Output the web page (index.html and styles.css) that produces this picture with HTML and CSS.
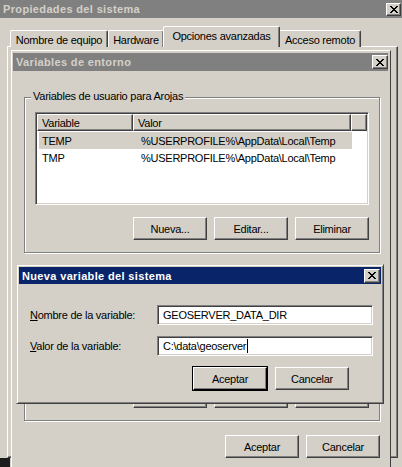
FILE: index.html
```html
<!DOCTYPE html>
<html lang="es">
<head>
<meta charset="utf-8">
<title>Propiedades del sistema</title>
<link rel="stylesheet" href="styles.css">
</head>
<body>
<div class="desk">
  <div class="win props">
    <div class="titlebar inactive props-title">
      <span>Propiedades del sistema</span>
      <span class="xbtn xsmall"><svg width="8" height="7" viewBox="0 0 8 7"><path d="M0 0h2v1H0z M6 0h2v1H6z M1 1h2v1H1z M5 1h2v1H5z M2 2h4v1H2z M3 3h2v1H3z M2 4h4v1H2z M1 5h2v1H1z M5 5h2v1H5z M0 6h2v1H0z M6 6h2v1H6z"/></svg></span>
    </div>
    <div class="tabs">
      <div class="tab t1">Nombre de equipo</div>
      <div class="tab t2">Hardware</div>
      <div class="tab t3 sel">Opciones avanzadas</div>
      <div class="tab t4">Acceso remoto</div>
    </div>
    <div class="tabpanel"></div>
    <div class="stub"></div>
  </div>

  <div class="win env">
    <div class="titlebar inactive env-title">
      <span>Variables de entorno</span>
      <span class="xbtn"><svg width="8" height="7" viewBox="0 0 8 7"><path d="M0 0h2v1H0z M6 0h2v1H6z M1 1h2v1H1z M5 1h2v1H5z M2 2h4v1H2z M3 3h2v1H3z M2 4h4v1H2z M1 5h2v1H1z M5 5h2v1H5z M0 6h2v1H0z M6 6h2v1H6z"/></svg></span>
    </div>
    <div class="env-body">
      <div class="group">
        <span class="glabel">Variables de usuario para Arojas</span>
        <div class="listview">
          <div class="lv-head">
            <div class="hcol c1">Variable</div>
            <div class="hcol c2">Valor</div>
            <div class="hcol c3"></div>
          </div>
          <div class="lv-row sel"><span class="c1">TEMP</span><span class="c2">%USERPROFILE%\AppData\Local\Temp</span></div>
          <div class="lv-row"><span class="c1">TMP</span><span class="c2">%USERPROFILE%\AppData\Local\Temp</span></div>
        </div>
        <div class="btnrow">
          <div class="btn">Nueva...</div>
          <div class="btn">Editar...</div>
          <div class="btn">Eliminar</div>
        </div>
      </div>
      <div class="group">
        <div class="listview"></div>
        <div class="btnrow">
          <div class="btn"></div>
          <div class="btn"></div>
          <div class="btn"></div>
        </div>
      </div>
      <div class="btnrow bottom">
        <div class="btn">Aceptar</div>
        <div class="btn">Cancelar</div>
      </div>
    </div>
  </div>

  <div class="win newvar">
    <div class="titlebar active nv-title">
      <span>Nueva variable del sistema</span>
      <span class="xbtn"><svg width="8" height="7" viewBox="0 0 8 7"><path d="M0 0h2v1H0z M6 0h2v1H6z M1 1h2v1H1z M5 1h2v1H5z M2 2h4v1H2z M3 3h2v1H3z M2 4h4v1H2z M1 5h2v1H1z M5 5h2v1H5z M0 6h2v1H0z M6 6h2v1H6z"/></svg></span>
    </div>
    <div class="nv-body">
      <div class="field">
        <span class="flabel"><u>N</u>ombre de la variable:</span>
        <div class="input">GEOSERVER_DATA_DIR</div>
      </div>
      <div class="field">
        <span class="flabel"><u>V</u>alor de la variable:</span>
        <div class="input">C:\data\geoserver<span class="caret"></span></div>
      </div>
      <div class="nv-btns">
        <div class="btn default">Aceptar</div>
        <div class="btn">Cancelar</div>
      </div>
    </div>
  </div>
</div>
</body>
</html>
```
FILE: styles.css
```css
* { box-sizing: border-box; }
html, body { margin: 0; padding: 0; }
body {
  width: 402px;
  height: 467px;
  overflow: hidden;
  background: #d4d0c8;
  font: 11px "Liberation Sans", Arial, sans-serif;
  letter-spacing: -0.25px;
  color: #000;
}
.desk { position: relative; width: 402px; height: 467px; overflow: hidden; }
.win { position: absolute; background: #d4d0c8; }

/* title bars */
.titlebar {
  display: flex;
  align-items: center;
  justify-content: space-between;
  height: 18px;
  font-weight: bold;
  letter-spacing: 0.35px;
  padding: 0 2px 0 3px;
  white-space: nowrap;
}
.titlebar.inactive { background: #808080; color: #d4d0c8; }
.titlebar.active { background: #0a246a; color: #fff; }
.xbtn {
  width: 16px;
  height: 14px;
  background: #d4d0c8;
  border: 1px solid;
  border-color: #fff #404040 #404040 #fff;
  box-shadow: inset -1px -1px #808080;
  display: flex;
  align-items: center;
  justify-content: center;
}
.xbtn svg { display: block; fill: #000; }
.xsmall { width: 15px; height: 13px; }

/* outer window */
.props { left: 0; top: 0; width: 404px; height: 467px; }
.props-title { padding-right: 3px; }
.tabs {
  display: flex;
  align-items: flex-end;
  height: 20px;
  margin-top: 9px;
  padding-left: 10px;
  position: relative;
  z-index: 1;
}
.tab {
  height: 17px;
  border: 1px solid;
  border-color: #fff #404040 transparent #fff;
  border-bottom: 0;
  border-radius: 2px 2px 0 0;
  box-shadow: inset -1px 0 #808080;
  display: flex;
  align-items: center;
  justify-content: center;
  padding-top: 1px;
  background: #d4d0c8;
  white-space: nowrap;
}
.t1 { width: 98px; }
.t2 { width: 56px; }
.t3 { width: 117px; }
.t4 { width: 82px; }
.tab.sel { height: 21px; margin: 0 -1px; padding-top: 0; padding-bottom: 3px; position: relative; z-index: 2; }
.tabpanel {
  margin: -1px 0 0 7px;
  width: 391px;
  height: 412px;
  border: 1px solid;
  border-color: #fff #404040 #404040 #fff;
  box-shadow: inset -1px -1px #808080;
}
.stub { position: absolute; left: 0; top: 458px; width: 10px; height: 9px; background: #1c1c1c; }

/* env window */
.env {
  left: 11px;
  top: 50px;
  width: 380px;
  height: 430px;
  border: 1px solid;
  border-color: #fff #404040 #404040 #fff;
  padding: 2px 2px 0 1px;
}
.env-title { padding-right: 0; }
.env-body {
  display: flex;
  flex-direction: column;
  padding: 26px 0 0 11px;
}
.group {
  position: relative;
  width: 356px;
  height: 156px;
  border: 1px solid #808080;
  box-shadow: inset 1px 1px #fff, 1px 1px #fff;
  padding: 14px 10px 0 10px;
  display: flex;
  flex-direction: column;
}
.group + .group { margin-top: 12px; }
.glabel {
  position: absolute;
  left: 6px;
  top: -8px;
  padding: 0 2px;
  background: #d4d0c8;
  white-space: nowrap;
}
.listview {
  width: 334px;
  height: 93px;
  background: #fff;
  border: 1px solid;
  border-color: #808080 #fff #fff #808080;
  box-shadow: inset 1px 1px #404040, inset -1px -1px #d4d0c8;
  padding: 1px;
  overflow: hidden;
}
.lv-head { display: flex; height: 17px; }
.hcol {
  height: 17px;
  background: #d4d0c8;
  border: 1px solid;
  border-color: #fff #404040 #404040 #fff;
  box-shadow: inset -1px -1px #808080;
  padding-left: 4px;
  display: flex;
  align-items: center;
}
.hcol.c1 { width: 96px; }
.hcol.c2 { width: 218px; }
.hcol.c3 { flex: 1; }
.lv-row {
  display: flex;
  align-items: center;
  height: 17px;
  width: 313px;
  margin-left: 2px;
  padding-left: 3px;
  white-space: nowrap;
}
.lv-head + .lv-row { margin-top: 1px; }
.lv-row.sel { background: #d4d0c8; }
.lv-row .c1 { width: 99px; }
.btnrow { display: flex; justify-content: flex-end; gap: 7px; margin-top: 12px; }
.btn {
  width: 74px;
  height: 23px;
  background: #d4d0c8;
  border: 1px solid;
  border-color: #fff #404040 #404040 #fff;
  box-shadow: inset -1px -1px #808080;
  display: flex;
  align-items: center;
  justify-content: center;
  flex: none;
}
.btnrow.bottom { width: 356px; margin-top: 14px; }

/* new variable dialog */
.newvar {
  left: 16px;
  top: 264px;
  width: 368px;
  height: 140px;
  border: 1px solid;
  border-color: #d4d0c8 #404040 #404040 #d4d0c8;
  box-shadow: inset 1px 1px #fff, inset -1px -1px #808080;
  padding: 2px;
  z-index: 3;
}
.nv-title { height: 17px; padding-right: 1px; }
.nv-body { display: flex; flex-direction: column; gap: 11px; padding: 21px 0 0 11px; }
.field { display: flex; align-items: center; }
.flabel { width: 127px; white-space: nowrap; }
.input {
  width: 216px;
  height: 20px;
  background: #fff;
  border: 1px solid;
  border-color: #808080 #fff #fff #808080;
  box-shadow: inset 1px 1px #404040, inset -1px -1px #d4d0c8;
  padding-left: 5px;
  display: flex;
  align-items: center;
  white-space: nowrap;
}
.caret { display: inline-block; width: 1px; height: 14px; background: #000; margin-left: 1px; }
.nv-btns { display: flex; gap: 8px; padding-left: 163px; }
.btn.default { outline: 1px solid #000; border-right-color: #000; border-bottom-color: #000; }
```
